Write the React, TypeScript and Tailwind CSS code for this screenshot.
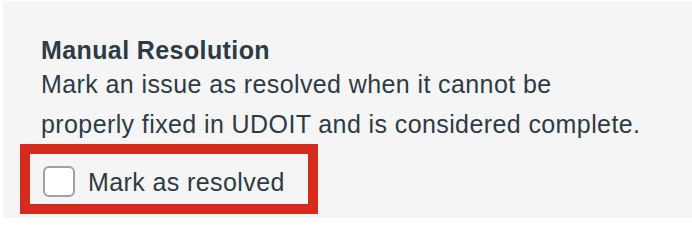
export default function App() {
  return (
    <div className="w-[692px] h-[224px] bg-white pl-[3px] pt-px" style={{ fontFamily: '"Liberation Sans", Arial, sans-serif' }}>
      <div className="h-[217px] bg-[#f5f5f5] pl-[38px] pt-[35px] text-[#2d3b45] text-[25px] tracking-[0.4px]">
        {/* Manual resolution section */}
        <h3 className="font-bold leading-[28px]">Manual Resolution</h3>
        <p className="leading-[40px] w-[640px]">
          Mark an issue as resolved when it cannot be
          <br />
          properly fixed in UDOIT and is considered complete.
        </p>
        <div className="-ml-[21px] w-[298px] border-[10px] border-[#d52b1e] pl-[13px] pt-[12px] pb-[7px]">
          <label className="flex items-center">
            <span className="w-[32px] h-[31px] rounded-[6px] border-2 border-[#9aa1a7] bg-white shrink-0"></span>
            <span className="ml-[13px] leading-[28px]">Mark as resolved</span>
          </label>
        </div>
      </div>
    </div>
  )
}
